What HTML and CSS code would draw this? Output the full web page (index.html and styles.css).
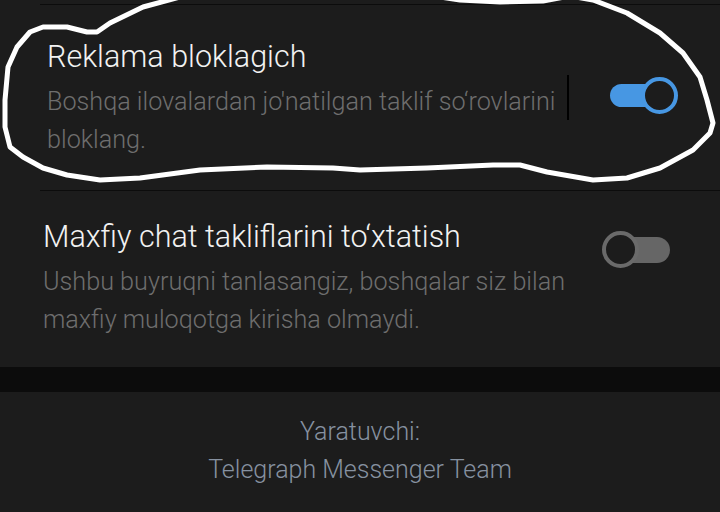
FILE: index.html
```html
<!DOCTYPE html>
<html lang="uz">
<head>
    <meta charset="UTF-8">
    <meta name="viewport" content="width=device-width, initial-scale=1.0">
    <title>Maxfiylik sozlamalari</title>
    <link rel="stylesheet" href="styles.css">
</head>
<body>

    <div class="screen">
        <div class="list">
            <div class="row row-first">
                <div class="text">
                    <div class="title">Reklama bloklagich</div>
                    <div class="desc">Boshqa ilovalardan jo'natilgan taklif so‘rovlarini bloklang.</div>
                </div>
                <div class="caret"></div>
                <div class="switch on">
                    <div class="track"></div>
                    <div class="knob"></div>
                </div>
            </div>

            <div class="row row-second">
                <div class="text">
                    <div class="title">Maxfiy chat takliflarini to‘xtatish</div>
                    <div class="desc">Ushbu buyruqni tanlasangiz, boshqalar siz bilan maxfiy muloqotga kirisha olmaydi.</div>
                </div>
                <div class="switch off">
                    <div class="knob"></div>
                    <div class="track"></div>
                </div>
            </div>
        </div>

        <div class="band"></div>

        <div class="footer">
            <p>Yaratuvchi:</p>
            <p>Telegraph Messenger Team</p>
        </div>

        <!-- hand drawn marker loop over the first setting -->
        <svg class="scribble" width="720" height="200" viewBox="0 0 720 200">
            <path d="M180 -3 L143 7 L110 23 L97 32 L87 32 L67 27 L43 27 L30 32 L17 47 L8 67 L5 100 L5 127 L10 147 L23 157 L43 168 L67 175 L100 180 L140 178 L200 170 L267 167 L333 168 L360 170 L427 168 L493 165 L520 165 L547 172 L593 180 L627 178 L660 168 L693 150 L710 133 L713 123 L707 100 L700 77 L683 53 L660 33 L627 13 L593 0 L570 -4 L543 1 L500 2 L460 0 L420 -6"/>
        </svg>
    </div>

</body>
</html>
```

FILE: styles.css
```css
body {
    margin: 0;
    background-color: #1c1c1c;
    font-family: Roboto, "Noto Sans", sans-serif;
    font-weight: 300;
    overflow: hidden;
}

.screen {
    position: relative;
    width: 720px;
    height: 512px;
    padding-top: 4px;
    box-sizing: border-box;
}

.row {
    display: flex;
    align-items: flex-start;
    margin-left: 40px;
    border-top: 1px solid #0c0c0c;
}

.row-first {
    padding: 34px 42px 31px 7px;
}

.row-second {
    padding: 28px 50px 28px 3px;
}

.row-first .text {
    width: 520px;
}

.row-second .text {
    width: 545px;
}

.title {
    font-size: 30.5px;
    line-height: 36px;
    color: #f2f2f2;
    margin-bottom: 8px;
}

.desc {
    font-size: 25.2px;
    line-height: 38px;
    color: #6e6e6e;
}

.caret {
    width: 2px;
    height: 45px;
    margin-top: 36px;
    background-color: #000;
}

/* switches */
.switch {
    display: flex;
    align-items: center;
    margin-left: auto;
}

.row-first .switch {
    margin-top: 38px;
}

.row-second .switch {
    margin-top: 12px;
}

.track {
    width: 55px;
    height: 23px;
    border-radius: 12px;
}

.knob {
    position: relative;
    z-index: 1;
    width: 37px;
    height: 37px;
    box-sizing: border-box;
    border-radius: 50%;
    border: 4px solid;
    background-color: #1c1c1c;
}

.switch.on .track {
    background-color: #4797e3;
}

.switch.on .knob {
    border-color: #4797e3;
    margin-left: -24px;
}

.switch.off .track {
    height: 26px;
    border-radius: 13px;
    background-color: #666666;
    margin-left: -24px;
}

.switch.off .knob {
    border-color: #6a6a6a;
}

.band {
    height: 25px;
    background-color: #0c0c0c;
}

.footer {
    padding-top: 21px;
    text-align: center;
}

.footer p {
    margin: 0;
    font-size: 25px;
    line-height: 38px;
    color: #8691a0;
}

.scribble {
    position: absolute;
    top: 0;
    left: 0;
    pointer-events: none;
}

.scribble path {
    fill: none;
    stroke: #ffffff;
    stroke-width: 5;
    stroke-linejoin: round;
    stroke-linecap: round;
}
```
